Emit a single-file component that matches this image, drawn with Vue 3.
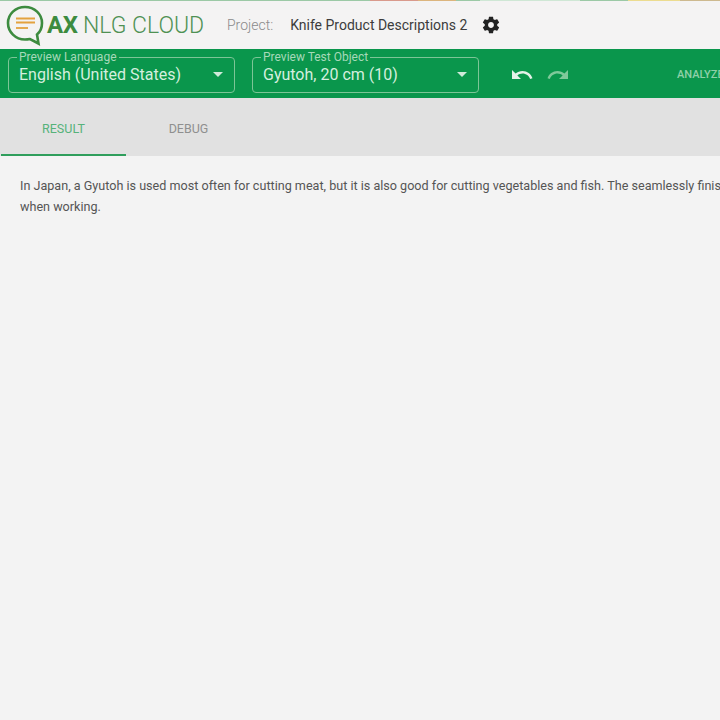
<script setup>
const selects = [
  { label: 'Preview Language', value: 'English (United States)', cls: 'lang' },
  { label: 'Preview Test Object', value: 'Gyutoh, 20 cm (10)', cls: 'obj' },
]
</script>

<template>
  <div class="page">
    <div class="top-strip">
      <span class="s1"></span><span class="s2"></span><span class="s3"></span><span class="s4"></span><span class="s5"></span><span class="s6"></span><span class="s7"></span><span class="s8"></span>
    </div>
    <header class="head">
      <svg class="logo" width="40" height="44" viewBox="0 0 40 44">
        <path d="M19 4C28.500 4 36 11 36 20C36 25.500 33.500 29.500 31 31.500L32.500 40.500L24 36C22.500 36.300 20.500 36.500 19 36.500C9.500 36.500 2 29 2 20C2 11 9.500 4 19 4Z" fill="none" stroke="#3d8b3f" stroke-width="2.600"/>
        <path d="M10 15.500H29M10 19.500H29" stroke="#e3a23f" stroke-width="1.800"/>
        <path d="M10 25H22" stroke="#e3a23f" stroke-width="1.800"/>
      </svg>
      <span class="brand"><b>AX</b> NLG CLOUD</span>
      <span class="proj-label">Project:</span>
      <span class="proj-name">Knife Product Descriptions 2</span>
      <svg class="gear" width="20" height="20" viewBox="0 0 24 24">
        <path fill="#222" d="M19.430 12.980c.04-.32.070-.64.070-.98s-.03-.66-.07-.98l2.110-1.650c.19-.15.240-.42.120-.64l-2-3.460c-.12-.22-.39-.30-.61-.22l-2.490 1c-.52-.4-1.080-.73-1.690-.98l-.38-2.650C14.460 2.180 14.250 2 14 2h-4c-.25 0-.46.180-.49.420l-.38 2.650c-.61.250-1.170.590-1.690.98l-2.490-1c-.23-.09-.49 0-.61.220l-2 3.460c-.13.220-.07.490.12.640l2.110 1.650c-.04.320-.07.650-.07.980s.03.660.07.980l-2.110 1.650c-.19.150-.24.420-.12.640l2 3.460c.12.220.39.300.61.220l2.490-1c.52.400 1.080.730 1.690.980l.38 2.650c.03.240.24.420.49.420h4c.25 0 .46-.180.49-.420l.38-2.650c.61-.250 1.170-.590 1.690-.980l2.490 1c.23.090.49 0 .61-.220l2-3.460c.12-.220.07-.490-.12-.640l-2.110-1.650zM12 15.500c-1.930 0-3.500-1.570-3.500-3.500s1.570-3.500 3.500-3.500 3.500 1.570 3.500 3.500-1.570 3.500-3.500 3.500z"/>
      </svg>
    </header>

    <div class="toolbar">
      <fieldset v-for="s in selects" :key="s.label" class="sel" :class="s.cls">
        <legend>{{ s.label }}</legend>
        <span class="val">{{ s.value }}</span>
        <span class="arrow"></span>
      </fieldset>
      <svg class="undo" width="24" height="24" viewBox="0 0 24 24">
        <path fill="#e4f2e8" d="M12.500 8c-2.650 0-5.050.990-6.900 2.600L2 7v9h9l-3.620-3.620c1.390-1.160 3.160-1.880 5.120-1.880 3.540 0 6.550 2.310 7.600 5.500l2.370-.78C21.080 11.030 17.150 8 12.500 8z"/>
      </svg>
      <svg class="redo" width="24" height="24" viewBox="0 0 24 24">
        <path fill="#7fc99a" d="M18.400 10.600C16.550 8.990 14.150 8 11.500 8c-4.650 0-8.580 3.030-9.960 7.220L3.900 16c1.050-3.190 4.050-5.500 7.600-5.500 1.950 0 3.730.720 5.120 1.880L13 16h9V7l-3.600 3.600z"/>
      </svg>
      <span class="analyze">ANALYZE</span>
    </div>

    <nav class="tabs">
      <div class="tab active">RESULT</div>
      <div class="tab">DEBUG</div>
    </nav>

    <main class="content">
      <p class="text">In Japan, a Gyutoh is used most often for cutting meat, but it is also good for cutting vegetables and fish. The seamlessly finished<br>when working.</p>
    </main>
  </div>
</template>

<style>
html, body { margin: 0; overflow: hidden; background: #f3f3f3; }
</style>

<style scoped>
.page {
  width: 720px; height: 720px; overflow: hidden; background: #f3f3f3;
  font-family: Roboto, "Liberation Sans", sans-serif;
}
.top-strip { display: flex; height: 1px; background: #9cc9a6; }
.top-strip span { display: block; height: 1px; }
.s1 { width: 370px; background: #9cc9a6; }
.s2 { width: 48px; background: #d99a8c; }
.s3 { width: 38px; background: #dcb57e; }
.s4 { width: 24px; background: #9cc9a6; }
.s5 { width: 100px; background: #cfe7d5; }
.s6 { width: 48px; background: #9cc9a6; }
.s7 { width: 52px; background: #ecdc90; }
.s8 { width: 40px; background: #cdb98f; }
.head {
  display: flex; align-items: center; height: 48px; padding-left: 6px;
  background: #f4f3f3; box-sizing: border-box;
}
.logo { flex-shrink: 0; }
.brand {
  margin-left: 1px; font-size: 23px; color: #4f9153; font-weight: 300; white-space: nowrap;
  width: 156px;
}
.brand b { font-size: 24px; font-weight: 700; color: #3d8b3f; letter-spacing: -0.5px; }
.proj-label { margin-left: 24px; font-size: 14px; color: #8b8b8b; font-weight: 300; }
.proj-name { margin-left: 17px; font-size: 14px; color: #3c3c3c; white-space: nowrap; }
.gear { margin-left: 14px; }
.toolbar {
  display: flex; align-items: center; height: 49px; background: #0a964c;
  padding-left: 8px; box-sizing: border-box; color: #cfeada; position: relative;
}
.sel {
  position: relative; display: flex; align-items: center; margin: 0; padding: 0 0 0 10px;
  height: 41px; border: 1px solid #7cc596; border-radius: 4px; box-sizing: border-box;
  top: -1px;
}
.sel legend {
  font-size: 12px; line-height: 10px; color: #a6d9b9; padding: 0 2px; margin-left: -2px;
  font-weight: 400;
}
.lang { width: 227px; }
.obj { width: 227px; margin-left: 17px; }
.val { font-size: 16px; color: #d4efdf; white-space: nowrap; position: relative; top: -3px; }
.arrow {
  position: absolute; right: 11px; top: 10px; width: 0; height: 0;
  border-left: 5.500px solid transparent; border-right: 5.500px solid transparent;
  border-top: 5.500px solid #cfeada;
}
.undo { margin-left: 31px; margin-top: 3px; }
.redo { margin-left: 12px; margin-top: 3px; }
.analyze {
  position: absolute; left: 677px; top: 19px; font-size: 11px; font-weight: 500; color: #8fd0a8;
  white-space: nowrap;
}
.tabs { display: flex; height: 58px; background: #e1e1e1; padding-left: 1px; box-sizing: border-box; }
.tab {
  width: 125px; height: 58px; display: flex; align-items: center; justify-content: center;
  font-size: 12.500px; color: #8f8f8f; box-sizing: border-box; padding-top: 2px;
}
.tab.active { color: #56b27a; box-shadow: inset 0 -2px 0 #2f9e5c; }
.content {
  padding: 19px 20px 0; background: #f3f3f3; height: 564px; box-sizing: border-box;
}
.text { margin: 0; width: 900px; font-size: 12.600px; line-height: 21px; color: #555; }
</style>
